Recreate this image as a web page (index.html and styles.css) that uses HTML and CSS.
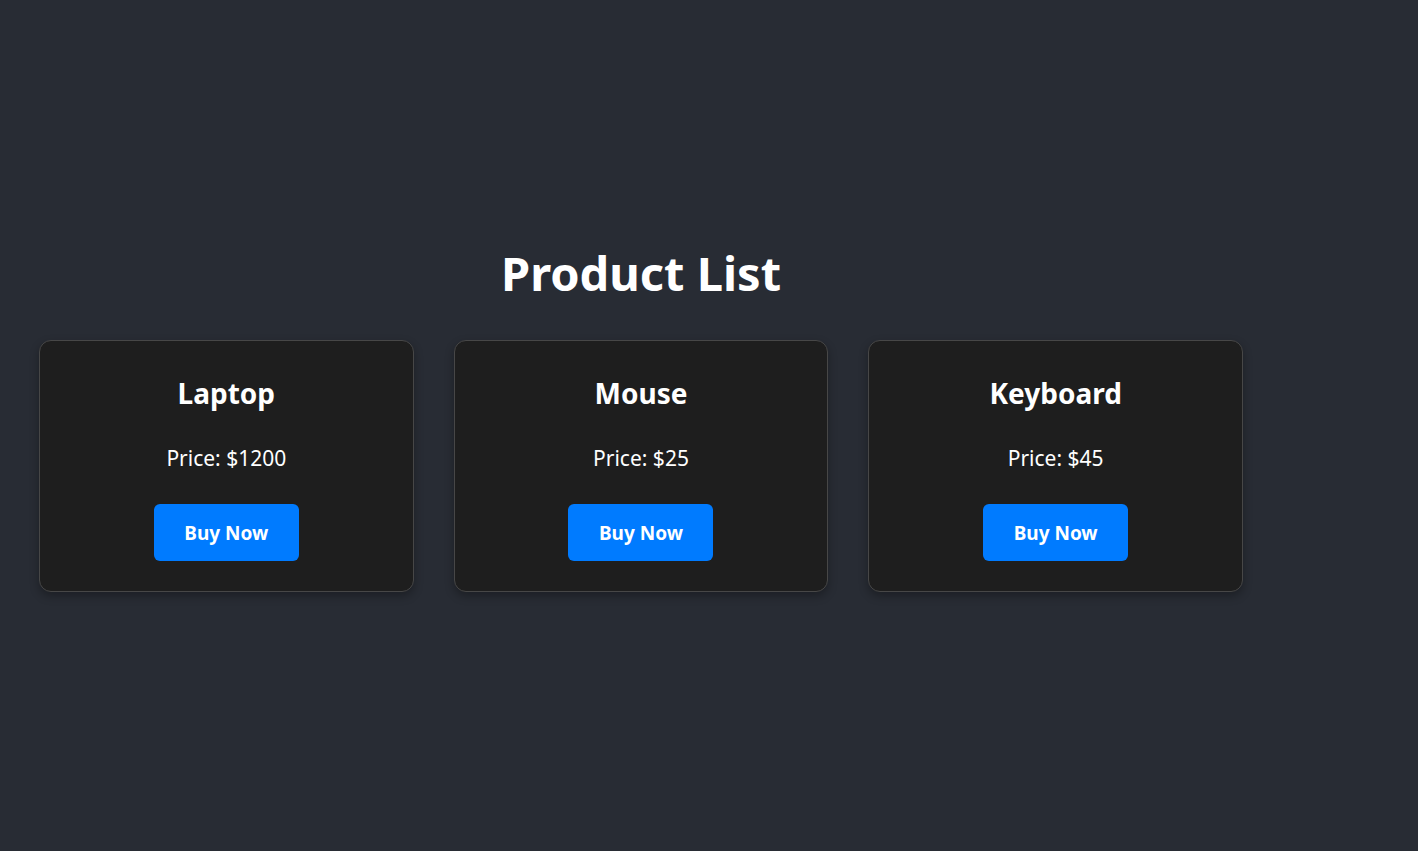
FILE: index.html
```html
<!DOCTYPE html>
<html lang="en">
<head>
<meta charset="utf-8">
<title>Product List</title>
<link rel="stylesheet" href="styles.css">
</head>
<body>
<main class="page">
  <h1 class="title">Product List</h1>
  <div class="grid">
    <div class="card">
      <h2 class="card-name">Laptop</h2>
      <p class="card-price">Price: $1200</p>
      <button class="buy">Buy Now</button>
    </div>
    <div class="card">
      <h2 class="card-name">Mouse</h2>
      <p class="card-price">Price: $25</p>
      <button class="buy">Buy Now</button>
    </div>
    <div class="card">
      <h2 class="card-name">Keyboard</h2>
      <p class="card-price">Price: $45</p>
      <button class="buy">Buy Now</button>
    </div>
  </div>
</main>
</body>
</html>
```

FILE: styles.css
```css
html, body {
  margin: 0;
  padding: 0;
}
body {
  background: #282c34;
  color: #ffffff;
  font-family: "Segoe UI", "Noto Sans", sans-serif;
  min-height: 100vh;
}
.page {
  width: 1204px;
  margin-left: 39px;
  padding-top: 241px;
}
.title {
  margin: 0 0 35px;
  height: 64px;
  text-align: center;
  font-size: 47px;
  font-weight: 700;
  line-height: 64px;
}
.grid {
  display: grid;
  grid-template-columns: repeat(3, 1fr);
  gap: 40px;
}
.card {
  display: flex;
  flex-direction: column;
  align-items: center;
  background: #1e1e1e;
  border: 1px solid #474747;
  border-radius: 12px;
  box-shadow: 0 4px 10px rgba(0, 0, 0, 0.3);
  padding: 33px 20px 30px;
}
.card-name {
  margin: 0 0 32px;
  font-size: 28px;
  font-weight: 700;
  line-height: 38px;
}
.card-price {
  margin: 0 0 31px;
  font-size: 21px;
  line-height: 29px;
}
.buy {
  width: 145px;
  height: 57px;
  border: none;
  border-radius: 6px;
  background: #007bff;
  color: #ffffff;
  font-family: "Segoe UI", "Noto Sans", sans-serif;
  font-size: 19px;
  font-weight: 700;
  cursor: pointer;
}
```
